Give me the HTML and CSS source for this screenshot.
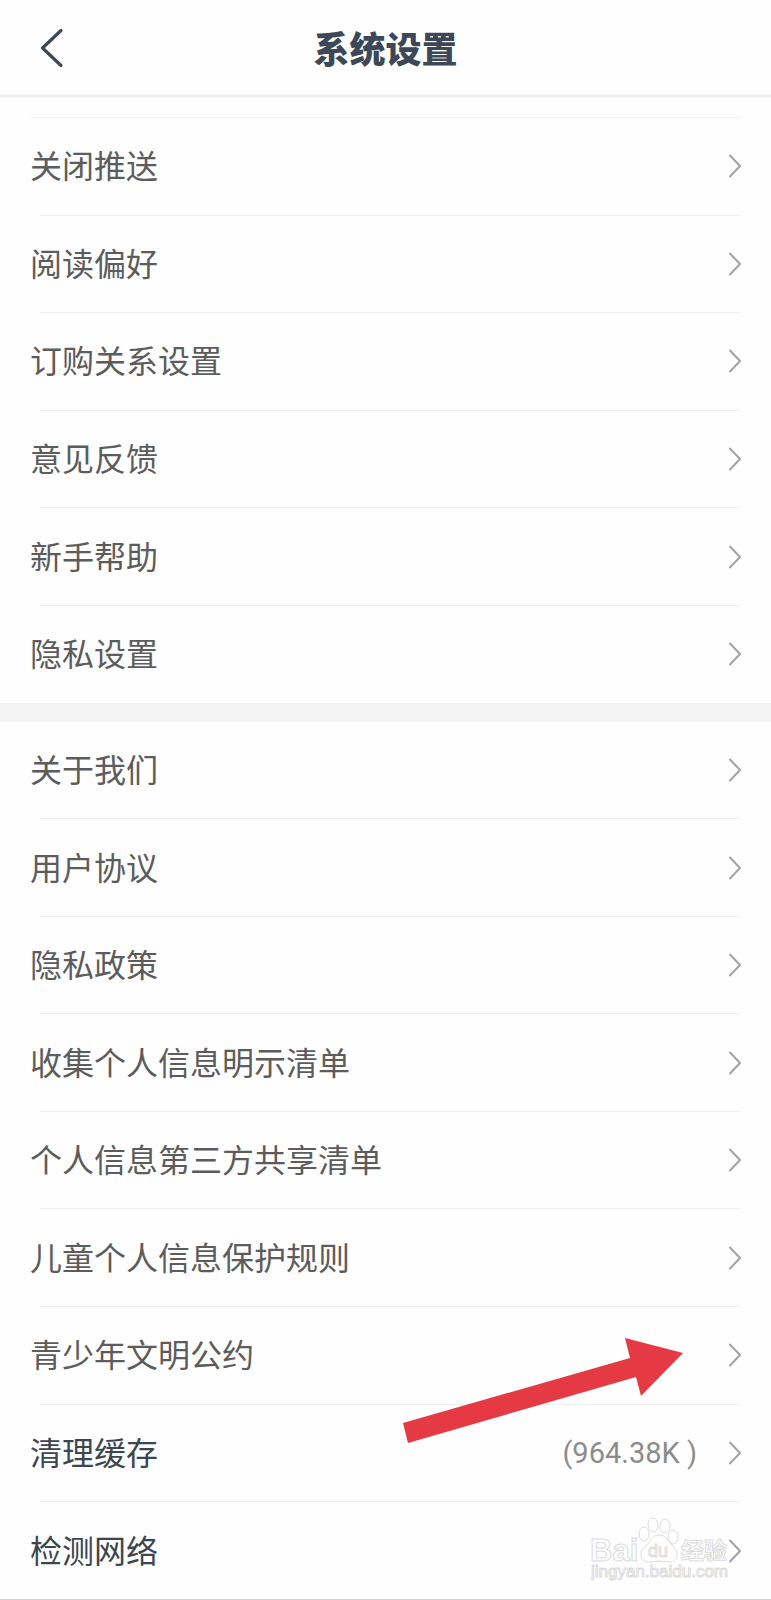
FILE: index.html
```html
<!DOCTYPE html>
<html lang="zh-CN">
  <head>
    <meta charset="UTF-8" />
    <meta name="viewport" content="width=device-width, initial-scale=1.0" />
    <title>系统设置</title>
    <link rel="stylesheet" href="styles.css" />
  </head>
  <body>
    <!-- flecha reutilizable -->
    <svg class="sprite" aria-hidden="true">
      <symbol id="chevron" viewBox="0 0 12 24">
        <path d="M1 1.5 L11 12 L1 22.5" fill="none" stroke="currentColor" stroke-width="2" stroke-linecap="round" stroke-linejoin="round" />
      </symbol>
    </svg>

    <div class="page">
      <header class="topbar">
        <button class="back" type="button" aria-label="返回">
          <svg width="24" height="40" viewBox="0 0 24 40">
            <path d="M21 2.500 L2.500 20 L21 37.500" fill="none" stroke="currentColor" stroke-width="3.200" stroke-linecap="round" stroke-linejoin="round" />
          </svg>
        </button>
        <h1 class="title">系统设置</h1>
      </header>

      <div class="spacer"></div>

      <ul class="list list-main">
        <li class="item"><a class="row" href="#push"><span class="label">关闭推送</span><svg class="chevron"><use href="#chevron" /></svg></a></li>
        <li class="item"><a class="row" href="#reading"><span class="label">阅读偏好</span><svg class="chevron"><use href="#chevron" /></svg></a></li>
        <li class="item"><a class="row" href="#orders"><span class="label">订购关系设置</span><svg class="chevron"><use href="#chevron" /></svg></a></li>
        <li class="item"><a class="row" href="#feedback"><span class="label">意见反馈</span><svg class="chevron"><use href="#chevron" /></svg></a></li>
        <li class="item"><a class="row" href="#help"><span class="label">新手帮助</span><svg class="chevron"><use href="#chevron" /></svg></a></li>
        <li class="item"><a class="row" href="#privacy"><span class="label">隐私设置</span><svg class="chevron"><use href="#chevron" /></svg></a></li>
      </ul>

      <ul class="list list-about">
        <li class="item"><a class="row" href="#about"><span class="label">关于我们</span><svg class="chevron"><use href="#chevron" /></svg></a></li>
        <li class="item"><a class="row" href="#terms"><span class="label">用户协议</span><svg class="chevron"><use href="#chevron" /></svg></a></li>
        <li class="item"><a class="row" href="#policy"><span class="label">隐私政策</span><svg class="chevron"><use href="#chevron" /></svg></a></li>
        <li class="item"><a class="row" href="#collected"><span class="label">收集个人信息明示清单</span><svg class="chevron"><use href="#chevron" /></svg></a></li>
        <li class="item"><a class="row" href="#shared"><span class="label">个人信息第三方共享清单</span><svg class="chevron"><use href="#chevron" /></svg></a></li>
        <li class="item"><a class="row" href="#children"><span class="label">儿童个人信息保护规则</span><svg class="chevron"><use href="#chevron" /></svg></a></li>
        <li class="item">
          <a class="row" href="#teens"><span class="label">青少年文明公约</span><svg class="chevron"><use href="#chevron" /></svg></a>
          <svg class="pointer" viewBox="0 0 281 106" aria-hidden="true">
            <polygon points="1,85 228,20 223,0 281,15 239,58 234,39 6,105" fill="#e53a44" />
          </svg>
        </li>
        <li class="item">
          <button class="row dark" type="button">
            <span class="label">清理缓存</span>
            <span class="size">(964.38K )</span>
            <svg class="chevron"><use href="#chevron" /></svg>
          </button>
        </li>
        <li class="item">
          <a class="row dark" href="#network"><span class="label">检测网络</span><svg class="chevron"><use href="#chevron" /></svg></a>
          <svg class="watermark" viewBox="0 0 140 70" aria-hidden="true">
            <g class="outline">
              <text x="-1" y="44" class="brand">Bai</text>
              <ellipse cx="62" cy="8" rx="5" ry="7" />
              <ellipse cx="74" cy="9" rx="5" ry="7" />
              <ellipse cx="53" cy="17" rx="5" ry="7" />
              <ellipse cx="82" cy="20" rx="5" ry="7" />
              <path d="M68 18 C60 18 59 26 54 30 C46 37 51 46 59 45 C64 44 72 44 77 45 C86 46 89 37 83 30 C77 25 76 18 68 18 Z" />
              <text x="57" y="40" class="du">du</text>
              <text x="90" y="42" class="jingyan">经验</text>
              <text x="0" y="60" class="site">jingyan.baidu.com</text>
            </g>
          </svg>
        </li>
      </ul>
    </div>
  </body>
</html>
```
FILE: styles.css
```css
* {
  box-sizing: border-box;
}

body {
  margin: 0;
  background: #fefefe;
  color: #5c5c5c;
  font-family: "Noto Sans CJK SC", sans-serif;
}

.sprite {
  position: absolute;
  width: 0;
  height: 0;
}

.page {
  display: flex;
  flex-direction: column;
  min-height: 100vh;
  border-bottom: 1px solid #d4d4d4;
}

/* cabecera */
.topbar {
  display: grid;
  grid-template-columns: 64px 1fr 64px;
  align-items: center;
  height: 97px;
  border-bottom: 2px solid #ececec;
}

.back {
  display: flex;
  justify-content: flex-end;
  padding: 0;
  border: 0;
  background: none;
  color: #3c4858;
}

.title {
  margin: 0;
  padding-bottom: 2px;
  font-size: 36px;
  line-height: 48px;
  font-weight: 900;
  text-align: center;
  color: #3c4858;
}

.spacer {
  height: 21px;
  margin: 0 30px;
  border-bottom: 1px solid #f2f2f2;
}

/* listas */
.list {
  display: flex;
  flex-direction: column;
  margin: 0;
  padding: 0;
  list-style: none;
}

.list-main {
  flex: 6 0 auto;
}

.list-about {
  flex: 9 0 auto;
  border-top: 19px solid #f4f4f4;
}

.item {
  display: flex;
  flex-direction: column;
  flex: 1 0 auto;
  position: relative;
  min-height: 97px;
}

/* separador al pie de cada fila */
.item:not(:last-child)::after {
  content: "";
  height: 1px;
  margin: 0 31px 0 40px;
  background: #f0f0f0;
}

.row {
  display: flex;
  align-items: center;
  flex: 1;
  width: 100%;
  padding: 0 30px;
  border: 0;
  background: none;
  color: inherit;
  font-family: inherit;
  font-size: 32px;
  line-height: 48px;
  text-align: left;
  text-decoration: none;
}

.label {
  padding-bottom: 4px;
}

.dark {
  color: #3c4650;
}

.chevron {
  width: 12px;
  height: 24px;
  margin-left: auto;
  color: #a0a4aa;
}

.size {
  margin-left: auto;
  color: #8c8c8c;
  font-family: Roboto, sans-serif;
  font-size: 29px;
}

.size + .chevron {
  margin-left: 32px;
}

/* flecha roja encima de las filas */
.pointer {
  position: absolute;
  z-index: 1;
  top: 31px;
  right: 88px;
  width: 281px;
  height: 106px;
}

/* marca de agua */
.watermark {
  position: absolute;
  right: 40px;
  bottom: 12px;
  width: 140px;
  height: 70px;
}

.outline {
  fill: #fefefe;
  stroke: #dcdcdc;
  stroke-width: 1px;
  font-family: "Liberation Sans", sans-serif;
}

.brand {
  font-size: 31px;
  font-weight: bold;
}

.du {
  font-size: 18px;
}

.jingyan {
  font-family: "Noto Sans CJK SC", sans-serif;
  font-size: 23px;
  font-weight: bold;
}

.site {
  font-size: 17px;
}
```
